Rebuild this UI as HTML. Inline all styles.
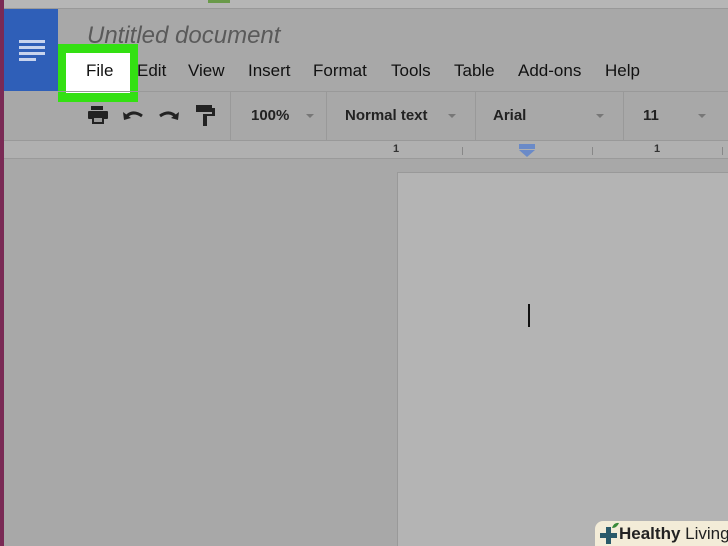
<!DOCTYPE html>
<html style="width:728px;height:546px;overflow:hidden"><head><meta charset="utf-8"><style>
*{margin:0;padding:0;box-sizing:border-box}
body{width:728px;height:546px;overflow:hidden;background:#a8a8a8;font-family:"Liberation Sans",Arial,sans-serif;position:relative}
.abs{position:absolute;white-space:nowrap}
.menu span{position:absolute;top:61px;font-size:17px;color:#111}
.tb{font-size:15px;font-weight:bold;color:#222;position:absolute;top:107px}
.arr{position:absolute;top:114px;width:0;height:0;border-left:4px solid transparent;border-right:4px solid transparent;border-top:4px solid #777}
.sep{position:absolute;top:92px;width:1px;height:48px;background:#999}
</style></head><body>
<div class="abs" style="left:0;top:0;width:728px;height:9px;background:#b6b6b6;border-bottom:1px solid #999"></div>
<div class="abs" style="left:208px;top:0;width:22px;height:3px;background:#6a9a4a"></div>
<div class="abs" style="left:0;top:0;width:4px;bottom:0;background:#7a2a55"></div>
<div class="abs" style="left:4px;top:9px;width:54px;height:82px;background:#2f5fb8"></div>
<div class="abs" style="left:19px;top:40px;width:26px;height:3px;background:#c8d4ee"></div>
<div class="abs" style="left:19px;top:46px;width:26px;height:3px;background:#c8d4ee"></div>
<div class="abs" style="left:19px;top:52px;width:26px;height:3px;background:#c8d4ee"></div>
<div class="abs" style="left:19px;top:58px;width:17px;height:3px;background:#c8d4ee"></div>
<div class="abs" style="left:87px;top:22px;font-size:24px;font-style:italic;color:#5a5a5a">Untitled document</div>
<div class="abs" style="left:58px;top:44px;width:80px;height:58px;background:#33e012"></div>
<div class="abs" style="left:66px;top:53px;width:64px;height:40px;background:#fff"></div>
<div class="menu">
<span style="left:86px">File</span><span style="left:137px">Edit</span><span style="left:188px">View</span><span style="left:248px">Insert</span><span style="left:313px">Format</span><span style="left:391px">Tools</span><span style="left:454px">Table</span><span style="left:518px">Add-ons</span><span style="left:605px">Help</span>
</div>
<div class="abs" style="left:58px;top:91px;width:670px;height:1px;background:#999"></div>
<div class="abs" style="left:4px;top:140px;width:724px;height:1px;background:#999"></div>
<div class="abs" style="left:4px;top:141px;width:724px;height:18px;background:#b0b0b0;border-bottom:1px solid #9a9a9a"></div>
<svg class="abs" style="left:88px;top:104px" width="130" height="24" viewBox="0 0 130 24">
<rect x="3" y="2" width="12" height="4" fill="#222"/><rect x="0" y="7" width="20" height="8" rx="1" fill="#222"/><rect x="4" y="13" width="12" height="7" fill="#222"/><rect x="6" y="14" width="8" height="4" fill="#999"/>
<path d="M37 14 Q44 5 54 12" stroke="#222" stroke-width="3" fill="none"/><path d="M35 8 L36 16 L43 14 Z" fill="#222"/>
<path d="M89 14 Q82 5 72 12" stroke="#222" stroke-width="3" fill="none"/><path d="M91 8 L90 16 L83 14 Z" fill="#222"/>
<rect x="108" y="1" width="16" height="7" fill="#222"/><rect x="124" y="4" width="3" height="7" fill="#222"/><rect x="115" y="10" width="12" height="2" fill="#222"/><rect x="115" y="11" width="4" height="11" fill="#222"/>
</svg>
<div class="sep" style="left:230px"></div><div class="sep" style="left:326px"></div><div class="sep" style="left:475px"></div><div class="sep" style="left:623px"></div>
<div class="tb" style="left:251px">100%</div><div class="arr" style="left:306px"></div>
<div class="tb" style="left:345px">Normal text</div><div class="arr" style="left:448px"></div>
<div class="tb" style="left:493px">Arial</div><div class="arr" style="left:596px"></div>
<div class="tb" style="left:643px">11</div><div class="arr" style="left:698px"></div>
<div class="abs" style="left:393px;top:143px;font-size:11px;font-weight:bold;color:#333">1</div>
<div class="abs" style="left:654px;top:143px;font-size:11px;font-weight:bold;color:#333">1</div>
<div class="abs" style="left:462px;top:147px;width:1px;height:8px;background:#888"></div>
<div class="abs" style="left:592px;top:147px;width:1px;height:8px;background:#888"></div>
<div class="abs" style="left:722px;top:147px;width:1px;height:8px;background:#888"></div>
<svg class="abs" style="left:518px;top:144px" width="18" height="14"><rect x="1" y="0" width="16" height="5" fill="#6a8ac8"/><path d="M1 6 L17 6 L9 13 Z" fill="#6a8ac8"/></svg>
<div class="abs" style="left:397px;top:172px;width:331px;height:374px;background:#b4b4b4;border:1px solid #999;border-right:none;border-bottom:none"></div>
<div class="abs" style="left:528px;top:304px;width:2px;height:23px;background:#111"></div>
<div class="abs" style="left:595px;top:521px;width:133px;height:25px;background:#f3ecd8;border-radius:8px 0 0 0"></div>
<svg class="abs" style="left:598px;top:522px" width="22" height="22"><path d="M8 5h5v6h6v5h-6v6h-5v-6H2v-5h6z" fill="#2a5a6a"/><path d="M14 6 Q16 0 21 1 Q19 6 14 6z" fill="#3a8a3a"/></svg>
<div class="abs" style="left:619px;top:524px;font-size:17px;color:#222;white-space:nowrap"><b>Healthy</b> Living</div>
</body></html>
